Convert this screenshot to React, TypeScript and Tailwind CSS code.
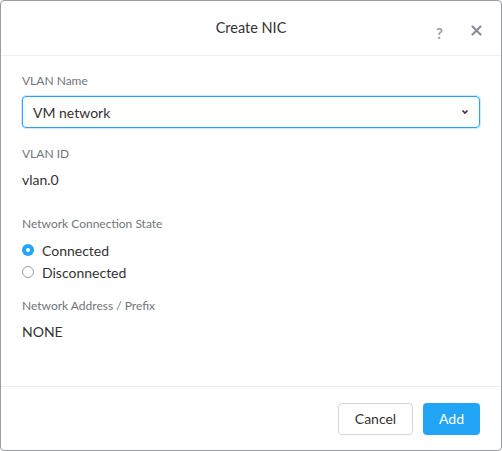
export default function App() {
  return (
    <div className="w-[502px] h-[451px] bg-white" style={{ fontFamily: "Lato, 'Open Sans', sans-serif" }}>
      <div className="w-full h-full border border-[#9a9ea3] rounded-[4px] flex flex-col overflow-hidden">
        <div className="h-[55px] shrink-0 border-b border-[#eceef0] flex items-center relative">
          <div className="w-full text-center text-[14.5px] text-[#333]">Create NIC</div>
          <div className="absolute right-[58px] top-[21px] text-[15px] font-bold text-[#9aa1a8]">?</div>
          <svg className="absolute right-[19px] top-[24px]" width="11" height="11" viewBox="0 0 11 11">
            <path d="M1.5 1.5 L9.5 9.5 M9.5 1.5 L1.5 9.5" stroke="#8a9097" strokeWidth="2.2" strokeLinecap="round" />
          </svg>
        </div>
        <div className="flex-1 px-[21px] pt-[17px] flex flex-col">
          <div className="text-[12px] text-[#6e757c] leading-[16px]">VLAN Name</div>
          <div className="mt-[7px] h-[32px] border border-[#22a5f7] rounded-[4px] shadow-[0_0_0_1px_#cfe9fd] flex items-center justify-between px-[10px]">
            <span className="text-[14px] text-[#333]">VM network</span>
            <svg width="8" height="6" viewBox="0 0 8 6"><path d="M1.5 1.5 L4 4 L6.5 1.5" stroke="#333" strokeWidth="1.6" fill="none" /></svg>
          </div>
          <div className="mt-[18px] text-[12px] text-[#6e757c] leading-[16px]">VLAN ID</div>
          <div className="mt-[9px] text-[14px] text-[#333] leading-[18px]">vlan.0</div>
          <div className="mt-[27px] text-[12px] text-[#6e757c] leading-[16px]">Network Connection State</div>
          <div className="mt-[9px] flex items-center gap-[8px] h-[18px]">
            <span className="w-[12px] h-[12px] rounded-full bg-[#22a5f7] flex items-center justify-center"><span className="w-[4px] h-[4px] rounded-full bg-white" /></span>
            <span className="text-[14px] text-[#333]">Connected</span>
          </div>
          <div className="mt-[4px] flex items-center gap-[8px] h-[18px]">
            <span className="w-[12px] h-[12px] rounded-full border border-[#9aa1a8] bg-white" />
            <span className="text-[14px] text-[#333]">Disconnected</span>
          </div>
          <div className="mt-[17px] text-[12px] text-[#6e757c] leading-[16px]">Network Address / Prefix</div>
          <div className="mt-[9px] text-[14px] text-[#333] leading-[18px]">NONE</div>
        </div>
        <div className="h-[64px] shrink-0 border-t border-[#eceef0] flex items-center justify-end gap-[10px] pr-[21px]">
          <button className="w-[75px] h-[32px] border border-[#d4d7da] rounded-[4px] bg-white text-[14px] text-[#333]">Cancel</button>
          <button className="w-[57px] h-[32px] rounded-[4px] bg-[#22a5f7] text-[14px] text-white">Add</button>
        </div>
      </div>
    </div>
  );
}
